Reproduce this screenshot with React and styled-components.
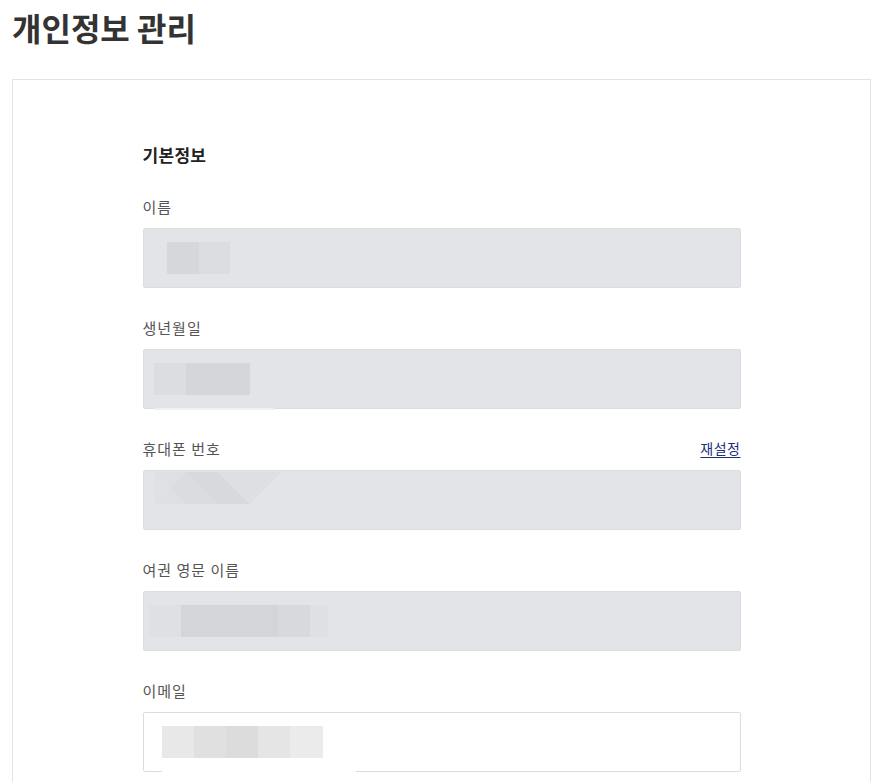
import React from 'react';
import styled, { createGlobalStyle } from 'styled-components';

const Global = createGlobalStyle`
  html, body {
    margin: 0;
    padding: 0;
    background: #fff;
    font-family: "Noto Sans CJK KR", "Noto Sans", sans-serif;
    color: #333;
  }
`;

const Page = styled.div`
  padding: 0 8px 0 12px;
`;

const Title = styled.h1`
  margin: 0;
  padding-top: 4px;
  height: 75px;
  font-size: 32px;
  line-height: 46px;
  font-weight: 700;
  color: #333;
`;

const Card = styled.div`
  border: 1px solid #e3e3e6;
  border-bottom: none;
  padding: 59px 0 40px;
  min-height: 700px;
`;

const Inner = styled.div`
  width: 598px;
  margin: 0 auto;
`;

const Section = styled.h2`
  margin: 0 0 23px;
  font-size: 17px;
  line-height: 32px;
  font-weight: 700;
  color: #222;
  letter-spacing: 0.3px;
`;

const Field = styled.div`
  margin-bottom: 27px;
`;

const LabelRow = styled.div`
  display: flex;
  justify-content: space-between;
  align-items: center;
  height: 24px;
  margin-bottom: 10px;
`;

const Label = styled.span`
  font-size: 15px;
  letter-spacing: 1px;
  color: #555;
`;

const Link = styled.a`
  font-size: 14px;
  letter-spacing: 0.5px;
  color: #1c2f7a;
  text-decoration: underline;
  text-underline-offset: 3px;
`;

const Box = styled.div`
  position: relative;
  height: 58px;
  border: 1px solid ${p => (p.$editable ? '#dcdcdf' : '#dcdde1')};
  background: ${p => (p.$editable ? '#fff' : '#e3e4e8')};
  border-radius: 2px;
  display: flex;
  align-items: center;
  padding-left: ${p => p.$indent}px;
`;

const Mosaic = styled.div`
  display: flex;
  height: 32px;
  margin-top: ${p => p.$shift || 0}px;
`;

const Tile = styled.div`
  width: ${p => p.$w || 32}px;
  height: 100%;
  background: ${p => p.$c};
`;

const Trail = styled.div`
  position: absolute;
  left: ${p => p.$x}px;
  top: 100%;
  width: ${p => p.$w}px;
  height: 2px;
  background: ${p => p.$c};
`;

const fields = [
  { label: '이름', indent: 23, tiles: [['#d6d7da', 32], ['#dcdde0', 31]] },
  { label: '생년월일', indent: 10, tiles: [['#dcdde0', 32], ['#d5d6d9', 64]], trail: { x: 10, w: 120, c: '#eef0f2' } },
  { label: '휴대폰 번호', indent: 10, phone: true, link: '재설정' },
  { label: '여권 영문 이름', indent: 5, tiles: [['#dfe0e3', 32], ['#d4d5d9', 97], ['#d8d9dc', 32], ['#dfe0e3', 18]] },
  { label: '이메일', indent: 18, editable: true, tiles: [['#e8e8e8', 32], ['#e0e0e0', 32], ['#dcdcdc', 32], ['#e5e5e5', 32], ['#ebebeb', 33]], trail: { x: 18, w: 194, c: '#fff' } },
];

const PhoneBlur = () => (
  <svg width="128" height="32" viewBox="0 0 128 32">
    <polygon points="0,0 32,0 16,16 0,0" fill="#e1e2e5" />
    <polygon points="0,32 16,16 32,32" fill="#e1e2e5" />
    <polygon points="0,0 16,16 0,32" fill="#e0e1e4" />
    <polygon points="0,0 32,0 16,16" fill="#dfe0e3" />
    <polygon points="16,16 32,0 64,32 32,32" fill="#dbdcdf" />
    <polygon points="32,0 64,0 96,32 64,32" fill="#d8d9dc" />
    <polygon points="64,0 128,0 96,32" fill="#dedfe2" />
    <polygon points="16,16 32,32 0,32" fill="#dfe0e3" />
  </svg>
);

const App = () => (
  <>
    <Global />
    <Page>
      <Title>개인정보 관리</Title>
      <Card>
        <Inner>
          <Section>기본정보</Section>
          {fields.map(f => (
            <Field key={f.label}>
              <LabelRow>
                <Label>{f.label}</Label>
                {f.link && <Link href="#">{f.link}</Link>}
              </LabelRow>
              <Box $editable={f.editable} $indent={f.indent}>
                {f.phone ? (
                  <Mosaic $shift={-24}>
                    <PhoneBlur />
                  </Mosaic>
                ) : (
                  <Mosaic>
                    {f.tiles.map(([c, w], i) => (
                      <Tile key={i} $c={c} $w={w} />
                    ))}
                  </Mosaic>
                )}
                {f.trail && <Trail $x={f.trail.x} $w={f.trail.w} $c={f.trail.c} />}
              </Box>
            </Field>
          ))}
        </Inner>
      </Card>
    </Page>
  </>
);

export default App;
